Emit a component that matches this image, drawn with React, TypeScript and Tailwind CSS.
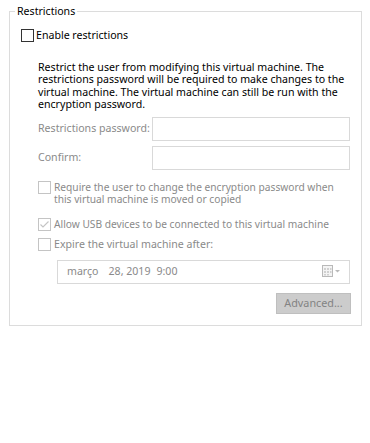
import React from 'react';

const font = { fontFamily: '"Noto Sans", "Liberation Sans", sans-serif' };

function Box({ disabled, checked }: { disabled?: boolean; checked?: boolean }) {
  return (
    <span
      className={`flex h-[13px] w-[13px] shrink-0 items-center justify-center border ${
        disabled ? 'border-[#c4c4c4] bg-white' : 'border-[#333333] bg-white'
      }`}
    >
      {checked && (
        <svg width="11" height="11" viewBox="0 0 11 11">
          <path d="M1.5 5.5 L4 8 L9.5 2.5" fill="none" stroke="#c4c4c4" strokeWidth="1.1" />
        </svg>
      )}
    </span>
  );
}

function CalendarIcon() {
  return (
    <svg width="20" height="13" viewBox="0 0 20 13">
      <rect x="0.5" y="0.5" width="10" height="11" fill="#f4f4f4" stroke="#b9b9b9" />
      <g fill="#d0d0d0">
        <rect x="2" y="3" width="2" height="2" />
        <rect x="5" y="3" width="2" height="2" />
        <rect x="8" y="3" width="1.5" height="2" />
        <rect x="2" y="6" width="2" height="2" />
        <rect x="5" y="6" width="2" height="2" />
        <rect x="8" y="6" width="1.5" height="2" />
        <rect x="2" y="9" width="2" height="1.5" />
        <rect x="5" y="9" width="2" height="1.5" />
      </g>
      <path d="M13 5 L18 5 L15.5 7.5 Z" fill="#b9b9b9" />
    </svg>
  );
}

export default function App() {
  return (
    <div className="h-[443px] w-[370px] bg-white pl-[9px] pt-[3px] text-[10.6px] text-black" style={font}>
      {/* Restrictions group */}
      <fieldset className="h-[323px] w-[353px] border border-[#dcdcdc]">
        <legend className="ml-[5px] px-[2px] leading-[17px]">Restrictions</legend>

        <div className="ml-[11px] mt-[9px] flex items-center gap-[2px]">
          <Box />
          <span className="whitespace-nowrap leading-[13px]">Enable restrictions</span>
        </div>

        <p className="ml-[28px] mt-[19px] whitespace-nowrap leading-[12.4px]">
          Restrict the user from modifying this virtual machine. The
          <br />
          restrictions password will be required to make changes to the
          <br />
          virtual machine. The virtual machine can still be run with the
          <br />
          encryption password.
        </p>

        <div className="ml-[28px] mt-[6px] flex items-center text-[#8a8a8a]">
          <span className="w-[114px] whitespace-nowrap">Restrictions password:</span>
          <div className="h-[24px] w-[198px] border border-[#d9d9d9] bg-white" />
        </div>
        <div className="ml-[28px] mt-[5px] flex items-center text-[#8a8a8a]">
          <span className="w-[114px] whitespace-nowrap">Confirm:</span>
          <div className="h-[24px] w-[198px] border border-[#d9d9d9] bg-white" />
        </div>

        <div className="ml-[28px] mt-[11px] flex items-start gap-[3px] text-[#8a8a8a]">
          <Box disabled />
          <span className="whitespace-nowrap text-[10.2px] leading-[12.5px]">
            Require the user to change the encryption password when
            <br />
            this virtual machine is moved or copied
          </span>
        </div>

        <div className="ml-[28px] mt-[12px] flex items-center gap-[3px] text-[#8a8a8a]">
          <Box disabled checked />
          <span className="whitespace-nowrap text-[10.2px] leading-[13px]">
            Allow USB devices to be connected to this virtual machine
          </span>
        </div>

        <div className="ml-[28px] mt-[7px] flex items-center gap-[3px] text-[#8a8a8a]">
          <Box disabled />
          <span className="whitespace-nowrap leading-[13px]">Expire the virtual machine after:</span>
        </div>

        <div className="ml-[47px] mt-[9px] flex h-[24px] w-[293px] items-center border border-[#d9d9d9] pl-[9px] pr-[7px] text-[#8a8a8a]">
          <span>março</span>
          <span className="ml-[10px]">28, 2019</span>
          <span className="ml-[6px]">9:00</span>
          <span className="ml-auto flex">
            <CalendarIcon />
          </span>
        </div>

        <div className="mr-[10px] mt-[9px] flex justify-end">
          <button className="h-[21px] w-[75px] border border-[#bfbfbf] bg-[#cccccc] text-[10.8px] text-[#838383]">
            Advanced...
          </button>
        </div>
      </fieldset>
    </div>
  );
}
